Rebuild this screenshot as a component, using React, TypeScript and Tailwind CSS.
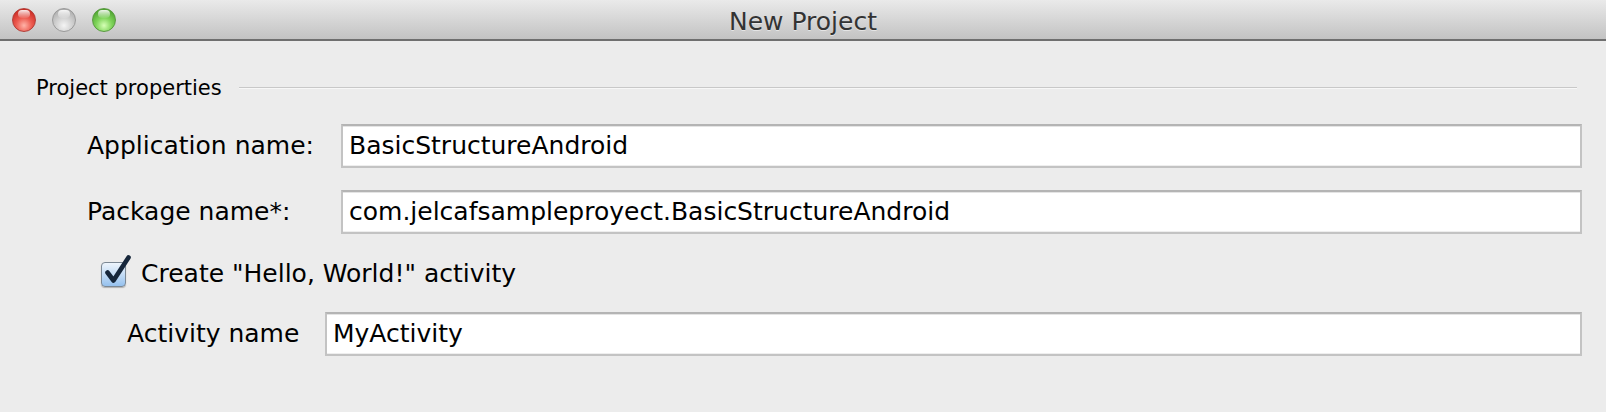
import React from 'react';

function TrafficLight({ tone }: { tone: 'red' | 'gray' | 'green' }) {
    const fill = {
        red: 'bg-[radial-gradient(circle_at_50%_75%,#ffb3a8_0%,#ec5a4f_40%,#c8261f_85%,#a31d17_100%)] border-[#b2403a]',
        gray: 'bg-[radial-gradient(circle_at_50%_75%,#f4f4f4_0%,#d2d2d2_40%,#ababab_85%,#939393_100%)] border-[#9a9a9a]',
        green: 'bg-[radial-gradient(circle_at_50%_75%,#d6ffb6_0%,#7fd45a_40%,#4a9f2c_85%,#3b8322_100%)] border-[#5a9a42]',
    }[tone];
    return (
        <div className={`relative w-[24px] h-[24px] rounded-full border ${fill}`}>
            <div className="absolute left-[5px] top-[1px] w-[12px] h-[8px] rounded-full bg-linear-to-b from-white/90 to-white/10" />
        </div>
    );
}

function TextField({ value }: { value: string }) {
    return (
        <div className="flex-1 h-[44px] flex items-center bg-white border-2 border-[#c3c3c3] border-t-[#b4b4b4] shadow-[inset_0_1px_0_#e4e4e4,inset_0_-1px_0_#eeeeee] px-[6px] text-[25px] text-black">
            {value}
        </div>
    );
}

function CheckBox() {
    return (
        <div className="relative w-[25px] h-[25px]">
            <div className="w-full h-full rounded-[4px] border border-[#7c8894] bg-linear-to-b from-[#eef5fc] via-[#c4dcf5] to-[#95c1ee] shadow-[0_1px_1px_rgba(0,0,0,0.25)]" />
            <svg className="absolute left-[2px] top-[-7px]" width="30" height="32" viewBox="0 0 30 32">
                <path d="M4.5 17.5 L10.5 25.5 L25.5 2.5" fill="none" stroke="#16263a" strokeWidth="4.6" strokeLinecap="round" strokeLinejoin="round" />
            </svg>
        </div>
    );
}

export default function App() {
    return (
        <div className="w-[1606px] h-[412px] overflow-hidden bg-[#ececec] font-['DejaVu_Sans',sans-serif]">
            {/* title bar */}
            <div className="relative h-[41px] bg-linear-to-b from-[#eaeaea] to-[#c3c3c3] border-b-2 border-[#6f6f6f] flex items-center justify-center">
                <div className="absolute left-[12px] top-[8px] flex gap-[16px]">
                    <TrafficLight tone="red" />
                    <TrafficLight tone="gray" />
                    <TrafficLight tone="green" />
                </div>
                <span className="text-[25px] text-[#333333] pt-[5px] [text-shadow:0_1px_0_rgba(255,255,255,0.5)]">New Project</span>
            </div>

            <div className="pl-[36px] pr-[24px]">
                {/* group header */}
                <div className="mt-[35px] h-[24px] flex items-center">
                    <span className="text-[21px] text-black leading-none">Project properties</span>
                    <div className="ml-[17px] w-[1338px] h-[2px] bg-[#c8c8c8] border-b border-[#f7f7f7]" />
                </div>

                <div className="mt-[24px] pl-[51px] flex items-center">
                    <span className="w-[254px] text-[25px] text-black">Application name:</span>
                    <TextField value="BasicStructureAndroid" />
                </div>

                <div className="mt-[22px] pl-[51px] flex items-center">
                    <span className="w-[254px] text-[25px] text-black">Package name*:</span>
                    <TextField value="com.jelcafsampleproyect.BasicStructureAndroid" />
                </div>

                <div className="mt-[18px] h-[44px] pl-[65px] flex items-center gap-[15px]">
                    <CheckBox />
                    <span className="text-[25px] text-black">Create "Hello, World!" activity</span>
                </div>

                <div className="mt-[16px] pl-[91px] flex items-center">
                    <span className="w-[198px] text-[25px] text-black">Activity name</span>
                    <TextField value="MyActivity" />
                </div>
            </div>
        </div>
    );
}
